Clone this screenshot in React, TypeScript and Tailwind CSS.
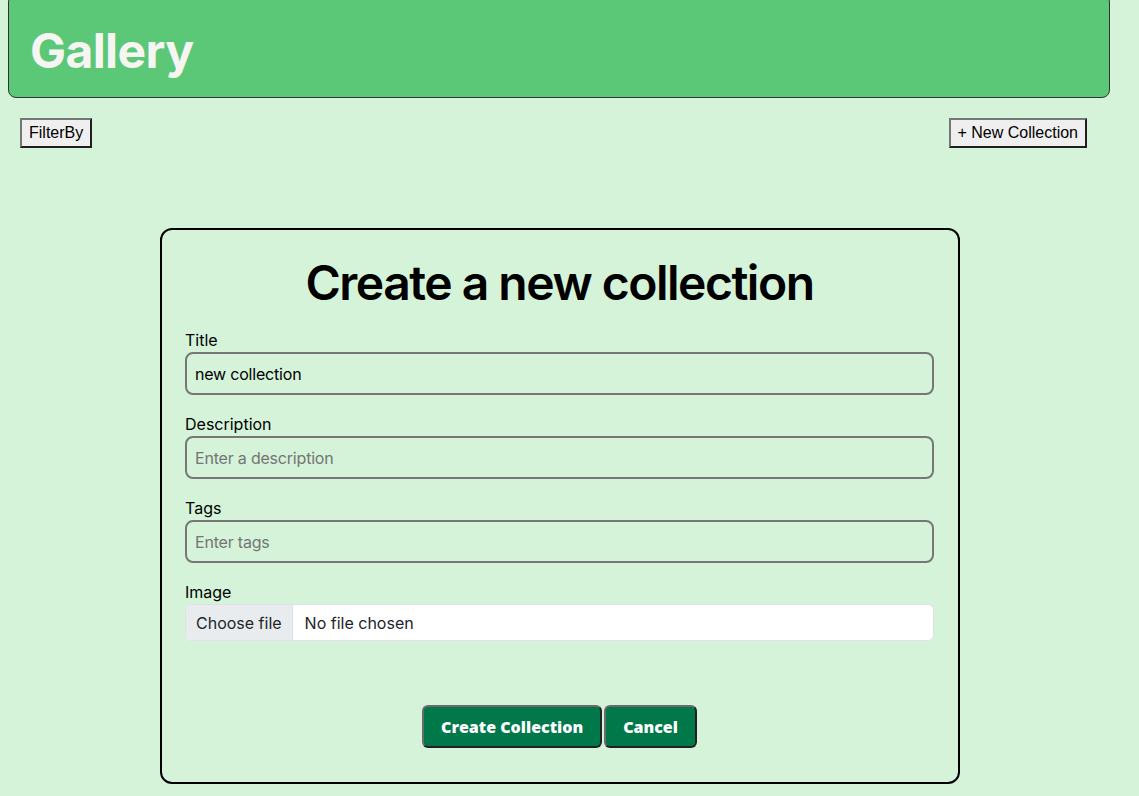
import { useState } from 'react'

const outsetBtn =
  "border-2 border-t-[#767676] border-l-[#767676] border-b-[#1f1f1f] border-r-[#1f1f1f] bg-[#efefef] px-[7px] py-[4px] text-[16px] leading-[18px] text-black font-['Liberation_Sans',Arial,sans-serif]"

const greenBtn =
  "h-[43px] rounded-md border-2 border-t-[#6b6b6b] border-l-[#6b6b6b] border-b-[#222222] border-r-[#222222] bg-[#00784a] px-[17px] text-[16px] font-extrabold text-white font-['Open_Sans',sans-serif]"

function Field({ label, value, placeholder }: { label: string; value?: string; placeholder: string }) {
  const [v, setV] = useState(value ?? '')
  return (
    <div className="mb-[17px] flex flex-col">
      <label className="text-[16px] leading-6 text-black">{label}</label>
      <input
        value={v}
        onChange={(e) => setV(e.target.value)}
        placeholder={placeholder}
        className="h-[43px] w-full rounded-lg border-2 border-[#777777] bg-transparent px-[8px] text-[16px] tracking-[-0.2px] text-black outline-none placeholder:text-[#757575]"
      />
    </div>
  )
}

export default function App() {
  return (
    <div className="min-h-screen overflow-hidden bg-[#d4f3d9] font-['Inter','Noto_Sans',sans-serif]">
      {/* Header */}
      <div className="-mt-[6px] ml-2 mr-[29px] h-[104px] rounded-lg border border-[#333333] bg-[#5bc878] pl-[21px] pt-[32px]">
        <h1 className="text-[48px] font-bold leading-[48px] tracking-[-0.6px] text-[#f7f5f2]">Gallery</h1>
      </div>

      {/* Toolbar */}
      <div className="mt-5 flex items-center justify-between pl-5 pr-[52px]">
        <button className={outsetBtn}>FilterBy</button>
        <button className={outsetBtn}>+ New Collection</button>
      </div>

      {/* Modal */}
      <div className="ml-[160px] mt-[80px] flex h-[556px] w-[800px] flex-col rounded-xl border-2 border-black pl-[23px] pr-6 pt-[24px] pb-[34px]">
        <h2 className="mb-4 text-center text-[48px] font-semibold leading-[58px] tracking-[-1.5px] text-black">Create a new collection</h2>

        <Field label="Title" value="new collection" placeholder="Enter a title" />
        <Field label="Description" placeholder="Enter a description" />
        <Field label="Tags" placeholder="Enter tags" />

        <div className="flex flex-col">
          <label className="text-[16px] leading-6 text-black">Image</label>
          <div className="flex h-[37px] w-full overflow-hidden rounded-md border border-[#dee2e6] bg-white text-[16px] text-[#212529]">
            <span className="flex items-center border-r border-[#dee2e6] bg-[#e9ecef] px-[10px]">Choose file</span>
            <span className="flex items-center pl-3">No file chosen</span>
          </div>
        </div>

        <div className="mt-auto flex justify-center gap-[2px]">
          <button className={greenBtn}>Create Collection</button>
          <button className={greenBtn}>Cancel</button>
        </div>
      </div>
    </div>
  )
}
